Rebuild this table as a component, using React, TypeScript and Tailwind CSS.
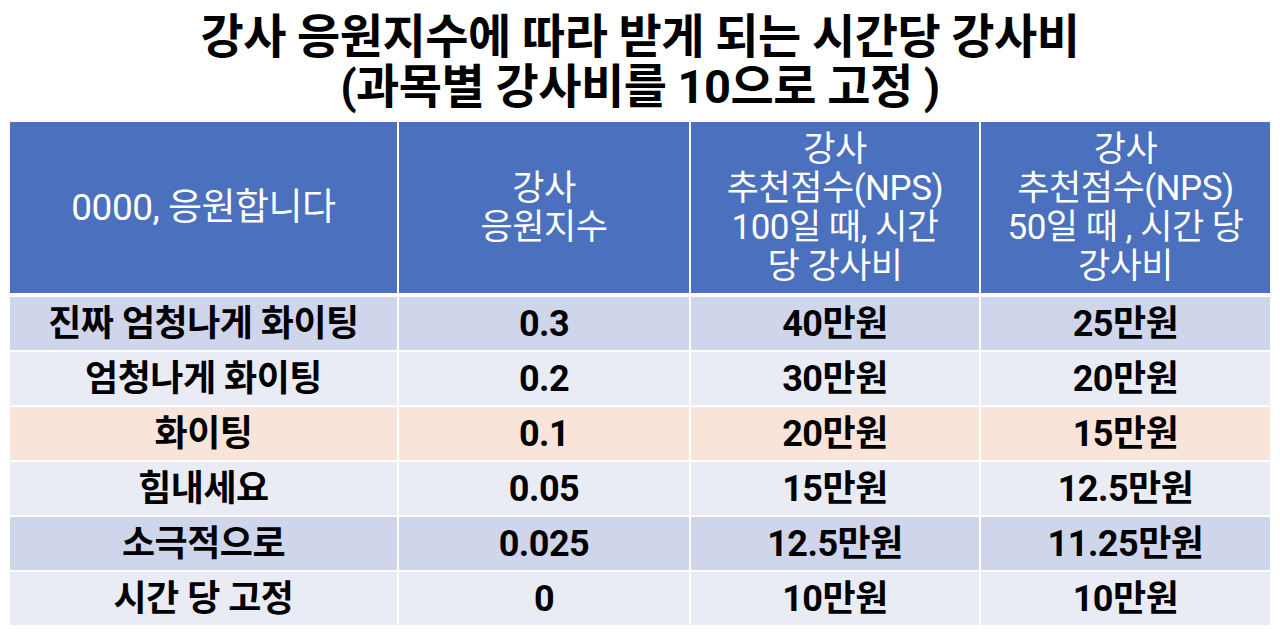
import React from 'react';

const rows = [
  { label: '진짜 엄청나게 화이팅', index: '0.3', nps100: '40만원', nps50: '25만원', bg: 'bg-[#cfd5ea]' },
  { label: '엄청나게 화이팅', index: '0.2', nps100: '30만원', nps50: '20만원', bg: 'bg-[#e9ebf5]' },
  { label: '화이팅', index: '0.1', nps100: '20만원', nps50: '15만원', bg: 'bg-[#f8e4d8]' },
  { label: '힘내세요', index: '0.05', nps100: '15만원', nps50: '12.5만원', bg: 'bg-[#e9ebf5]' },
  { label: '소극적으로', index: '0.025', nps100: '12.5만원', nps50: '11.25만원', bg: 'bg-[#cfd5ea]' },
  { label: '시간 당 고정', index: '0', nps100: '10만원', nps50: '10만원', bg: 'bg-[#e9ebf5]' },
];

const headers = [
  ['0000, 응원합니다'],
  ['강사', '응원지수'],
  ['강사', '추천점수(NPS)', '100일 때, 시간', '당 강사비'],
  ['강사', '추천점수(NPS)', '50일 때 , 시간 당', '강사비'],
];

export default function App() {
  return (
    <div className="w-[1280px] h-[632px] bg-white overflow-hidden font-['Roboto','Noto_Sans_CJK_KR',sans-serif]">
      <div className="h-[122px] pt-[12px] text-center text-black font-bold text-[47px] leading-[50px] tracking-[-0.5px]">
        <div>강사 응원지수에 따라 받게 되는 시간당 강사비</div>
        <div>(과목별 강사비를 10으로 고정 )</div>
      </div>

      <div className="ml-[10px] w-[1260px] grid grid-cols-[387px_290px_288px_289px] gap-x-[2px]">
        {headers.map((lines, i) => (
          <div
            key={i}
            className={`h-[171px] bg-[#4a70be] text-white ${i === 0 ? 'text-[37px]' : 'text-[35px]'} leading-[39px] tracking-[-0.5px] flex flex-col items-center justify-center text-center`}
          >
            {lines.map((l, j) => (
              <div key={j} className="whitespace-nowrap">{l}</div>
            ))}
          </div>
        ))}
      </div>

      <div className="mt-[4px] ml-[10px] w-[1260px] flex flex-col gap-y-[2px]">
        {rows.map((r) => (
          <div key={r.label} className="grid grid-cols-[387px_290px_288px_289px] gap-x-[2px]">
            {[r.label, r.index, r.nps100, r.nps50].map((v, i) => (
              <div
                key={i}
                className={`${r.bg} h-[53px] flex items-center justify-center text-black font-bold text-[36px] tracking-[-0.5px] whitespace-nowrap`}
              >
                {v}
              </div>
            ))}
          </div>
        ))}
      </div>
    </div>
  );
}
